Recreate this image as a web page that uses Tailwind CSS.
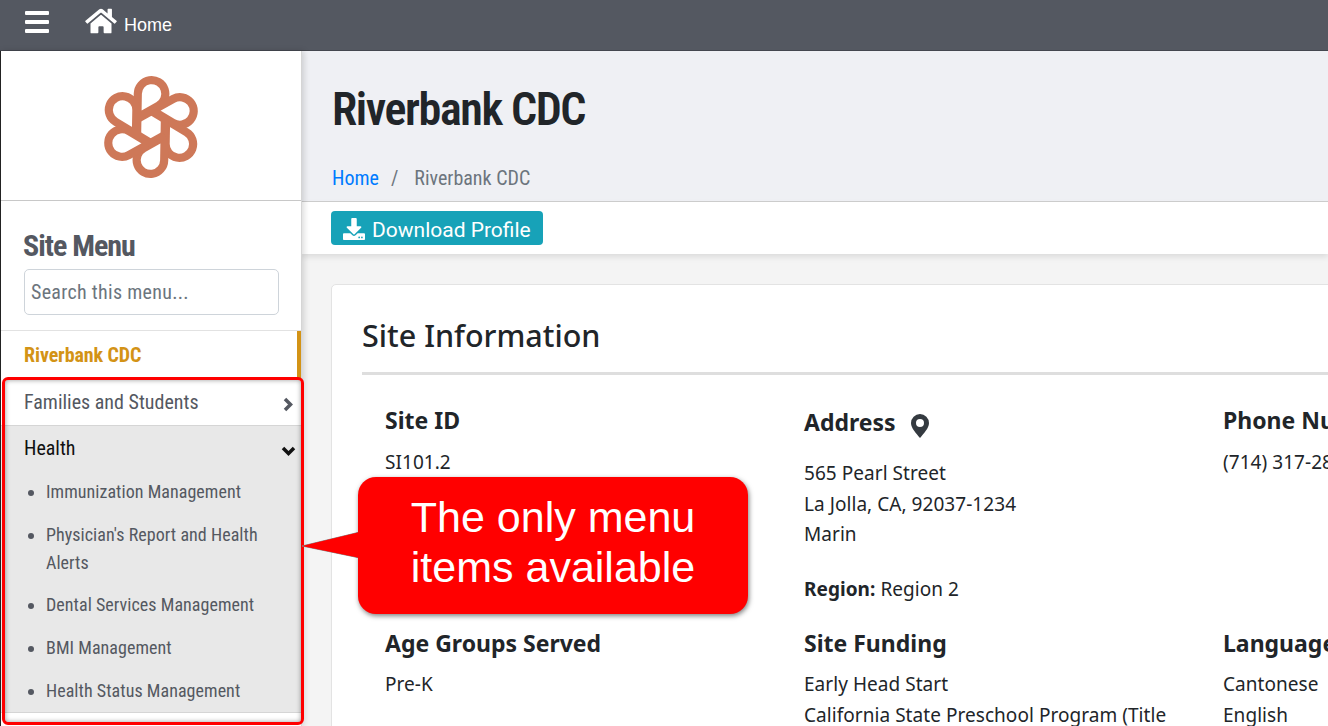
<!DOCTYPE html>
<html lang="en">
<head>
  <meta charset="UTF-8" />
  <title>Riverbank CDC</title>
  <script src="https://cdn.jsdelivr.net/npm/@tailwindcss/browser@4"></script>
</head>
<body class="relative w-[1328px] h-[726px] overflow-hidden bg-[#f4f4f4] font-['Noto_Sans',sans-serif] text-[#212529]">

  <!-- top bar -->
  <header class="h-[51px] bg-[#545861] flex items-center border-b border-[#44474f] pl-[25px]">
    <svg class="w-[24px] h-[22px] mb-[7px]" viewBox="0 0 24 22" fill="#fff"><rect y="0" width="24" height="4" rx="1"/><rect y="9" width="24" height="4" rx="1"/><rect y="18" width="24" height="4" rx="1"/></svg>
    <svg class="w-[32px] h-[28px] ml-[36px] mb-[9px]" viewBox="0 0 576 512" fill="#fff"><path d="M280.4 148.3L96 300.1V464a16 16 0 0 0 16 16l112.1-.3a16 16 0 0 0 15.9-16V368a16 16 0 0 1 16-16h64a16 16 0 0 1 16 16v95.6a16 16 0 0 0 16 16.1L464 480a16 16 0 0 0 16-16V300L295.7 148.3a12.2 12.2 0 0 0-15.3 0zM571.6 251.5L488 182.6V44a12 12 0 0 0-12-12h-56a12 12 0 0 0-12 12v72.6L318.5 43a48 48 0 0 0-61 0L4.3 251.5a12 12 0 0 0-1.6 16.9l25.5 31A12 12 0 0 0 45.2 301l235.2-193.7a12.2 12.2 0 0 1 15.3 0L530.9 301a12 12 0 0 0 16.9-1.6l25.5-31a12 12 0 0 0-1.7-16.9z"/></svg>
    <span class="ml-[7px] text-white text-[18px] pt-[1px] font-['Liberation_Sans',sans-serif]">Home</span>
  </header>

  <div class="flex h-[675px]">
    <!-- sidebar -->
    <aside class="w-[302px] shrink-0 bg-white border-l border-[#222] border-r border-r-[#d5d5d5] shadow-[2px_0_6px_rgba(0,0,0,0.15)] z-10 font-['Roboto',sans-serif]">
      <div class="h-[150px] flex items-center justify-center border-b border-[#c8c8c8] pt-[2px]">
        <svg class="w-[104px] h-[104px]" viewBox="-51 -51 102 102" fill="none" stroke="#ce7858" stroke-width="8" stroke-linejoin="round">
          <g transform="rotate(1)">
            <path d="M-13.5 7.8V-32.500A13.500 13.500 0 1 1 6.750 -20.810L-13.500 -9.120"/>
            <path transform="rotate(60)" d="M-13.5 7.8V-32.500A13.500 13.500 0 1 1 6.750 -20.810L-13.500 -9.120"/>
            <path transform="rotate(120)" d="M-13.5 7.8V-32.500A13.500 13.500 0 1 1 6.750 -20.810L-13.500 -9.120"/>
            <path transform="rotate(180)" d="M-13.5 7.8V-32.500A13.500 13.500 0 1 1 6.750 -20.810L-13.500 -9.120"/>
            <path transform="rotate(240)" d="M-13.5 7.8V-32.500A13.500 13.500 0 1 1 6.750 -20.810L-13.500 -9.120"/>
            <path transform="rotate(300)" d="M-13.5 7.8V-32.500A13.500 13.500 0 1 1 6.750 -20.810L-13.500 -9.120"/>
          </g>
        </svg>
      </div>
      <div class="h-[130px] border-b border-[#e2e2e2] pl-[22px] pt-[28px]">
        <h2 class="text-[30px] leading-[34px] font-bold tracking-[-1px] text-[#545861] [font-stretch:75%]">Site Menu</h2>
        <div class="mt-[6px] ml-px w-[255px] h-[46px] border border-[#ced4da] rounded-[5px] flex items-center pl-[6px] text-[20px] tracking-[0.3px] text-[#6c757d] [font-stretch:75%]">Search this menu...</div>
      </div>
      <div class="h-[47px] border-r-[4px] border-[#d39316] flex items-center pl-[23px] text-[20px] font-bold tracking-[-0.1px] text-[#d39316] [font-stretch:75%]">Riverbank CDC</div>
      <div class="h-[48px] flex items-center justify-between pl-[23px] pr-[8px] border-b border-[#d5d5d5] text-[20px] text-[#545861] [font-stretch:75%]">
        <span>Families and Students</span>
        <svg class="w-[10px] h-[15px] mt-[5px]" viewBox="0 0 10 15" fill="none" stroke="#545861" stroke-width="3.500"><path d="M2 2l5.500 5.500L2 13"/></svg>
      </div>
      <div class="bg-[#e8e8e8] border-b border-[#d5d5d5] h-[287px] pl-[23px] pr-[5px]">
        <div class="h-[44px] flex items-center justify-between text-[20px] text-[#111] [font-stretch:75%]">
          <span>Health</span>
          <svg class="w-[15px] h-[10px] mt-[5px]" viewBox="0 0 15 10" fill="none" stroke="#111" stroke-width="3.500"><path d="M2 2l5.500 5.500L13 2"/></svg>
        </div>
        <ul class="list-disc pl-[22px] pt-[8px] text-[18px] leading-[28px] tracking-[0.05px] text-[#545861] [font-stretch:75%] marker:text-[#545861]">
          <li class="pb-[15px]">Immunization Management</li>
          <li class="pb-[14px]">Physician's Report and Health Alerts</li>
          <li class="pb-[15px]">Dental Services Management</li>
          <li class="pb-[15px]">BMI Management</li>
          <li>Health Status Management</li>
        </ul>
      </div>
    </aside>

    <!-- main -->
    <main class="flex-1 min-w-0 overflow-hidden">
      <div class="h-[151px] bg-[#eff0f4] border-b border-[#cfcfcf] pl-[30px] font-['Roboto',sans-serif]">
        <h1 class="pt-[32px] text-[46px] leading-[52px] font-semibold tracking-[-1.4px] text-[#212529] [font-stretch:75%]">Riverbank CDC</h1>
        <div class="mt-[30px] flex text-[20px] leading-[26px] text-[#6c757d] [font-stretch:75%]">
          <span class="text-[#007bff]">Home</span><span class="ml-[12px] mr-[16px]">/</span><span>Riverbank CDC</span>
        </div>
      </div>
      <div class="h-[52px] bg-white shadow-[0_3px_6px_rgba(0,0,0,0.1)] pl-[29px] pt-[9px]">
        <div class="w-[212px] h-[34px] bg-[#17a2b8] rounded-[4px] flex items-center pl-[12px] text-white text-[21px] font-['Roboto',sans-serif]">
          <svg class="w-[22px] h-[22px] mr-[7px] mt-[1px]" viewBox="0 0 512 512" fill="#fff"><path d="M216 0h80c13.300 0 24 10.700 24 24v168h87.700c17.800 0 26.700 21.500 14.100 34.100L269.700 378.300c-7.500 7.500-19.800 7.500-27.300 0L90.100 226.100c-12.600-12.600-3.700-34.100 14.100-34.100H192V24c0-13.300 10.700-24 24-24zM512 376v112c0 13.300-10.700 24-24 24H24c-13.300 0-24-10.700-24-24V376c0-13.300 10.700-24 24-24h146.700l49 49c20.100 20.100 52.500 20.100 72.600 0l49-49H488c13.300 0 24 10.700 24 24z"/><circle cx="376" cy="452" r="20" fill="#17a2b8"/><circle cx="440" cy="452" r="20" fill="#17a2b8"/></svg>
          <span class="pt-[6px]">Download Profile</span>
        </div>
      </div>
      <div class="mt-[30px] ml-[29px] -mr-[10px] bg-white border border-[#e3e3e3] rounded-l-[5px] h-[500px] pl-[30px] pt-[28px]">
        <h3 class="text-[30.5px] leading-[44px] font-medium text-[#212529]">Site Information</h3>
        <div class="mt-[15px] h-[3px] bg-[#dedede]"></div>
        <div class="grid grid-cols-[419px_419px_300px] pl-[23px] pt-[28px] text-[19px] leading-[30.5px] tracking-[0.05px]">
          <div class="h-[223px]">
            <h4 class="text-[23px] leading-[34px] font-bold tracking-normal">Site ID</h4>
            <p class="mt-[10px]">SI101.2</p>
          </div>
          <div>
            <h4 class="text-[23px] leading-[34px] font-bold tracking-normal flex items-center pt-[2px]">Address
              <svg class="w-[18px] h-[24px] ml-[15px] mt-[8px]" viewBox="0 0 18 24" fill="#343a40"><path fill-rule="evenodd" d="M9 0a9 9 0 0 1 9 9c0 5-5 10-9 15C5 19 0 14 0 9a9 9 0 0 1 9-9zm0 5a4 4 0 1 0 0 8 4 4 0 0 0 0-8z"/></svg>
            </h4>
            <p class="mt-[19px]">565 Pearl Street<br />La Jolla, CA, 92037-1234<br />Marin</p>
            <p class="mt-[24px]"><b>Region:</b> Region 2</p>
          </div>
          <div>
            <h4 class="text-[23px] leading-[34px] font-bold tracking-normal whitespace-nowrap">Phone Number</h4>
            <p class="mt-[10px] whitespace-nowrap">(714) 317-2890</p>
          </div>
          <div>
            <h4 class="text-[23px] leading-[34px] font-bold tracking-normal">Age Groups Served</h4>
            <p class="mt-[9px]">Pre-K</p>
          </div>
          <div>
            <h4 class="text-[23px] leading-[34px] font-bold tracking-normal">Site Funding</h4>
            <p class="mt-[9px] w-[380px]">Early Head Start<br />California State Preschool Program (Title</p>
          </div>
          <div>
            <h4 class="text-[23px] leading-[34px] font-bold tracking-normal whitespace-nowrap">Languages</h4>
            <p class="mt-[9px]">Cantonese<br />English</p>
          </div>
        </div>
      </div>
    </main>
  </div>

  <!-- annotation overlay -->
  <div class="absolute left-[2px] top-[377px] w-[302px] h-[348px] border-[3px] border-[#ff0000] rounded-[6px] shadow-[inset_0_0_5px_rgba(0,0,0,0.4)] z-20"></div>
  <svg class="absolute left-[300px] top-[470px] z-20 overflow-visible" width="70" height="150" viewBox="0 0 70 150"><path d="M2 76L60 62V88Z" fill="#f00" stroke="#8a8a8a" stroke-width="1"/></svg>
  <div class="absolute left-[358px] top-[477px] w-[390px] h-[137px] bg-[#ff0000] rounded-[18px] shadow-[1px_2px_5px_rgba(0,0,0,0.5)] z-20 flex items-center justify-center text-center text-white text-[43px] leading-[50px] pb-[8px] font-['Liberation_Sans',sans-serif]">The only menu<br />items available</div>
  <svg class="absolute left-[300px] top-[470px] z-20" width="70" height="150" viewBox="0 0 70 150"><path d="M2 76L60 62V88Z" fill="#f00"/></svg>
</body>
</html>
